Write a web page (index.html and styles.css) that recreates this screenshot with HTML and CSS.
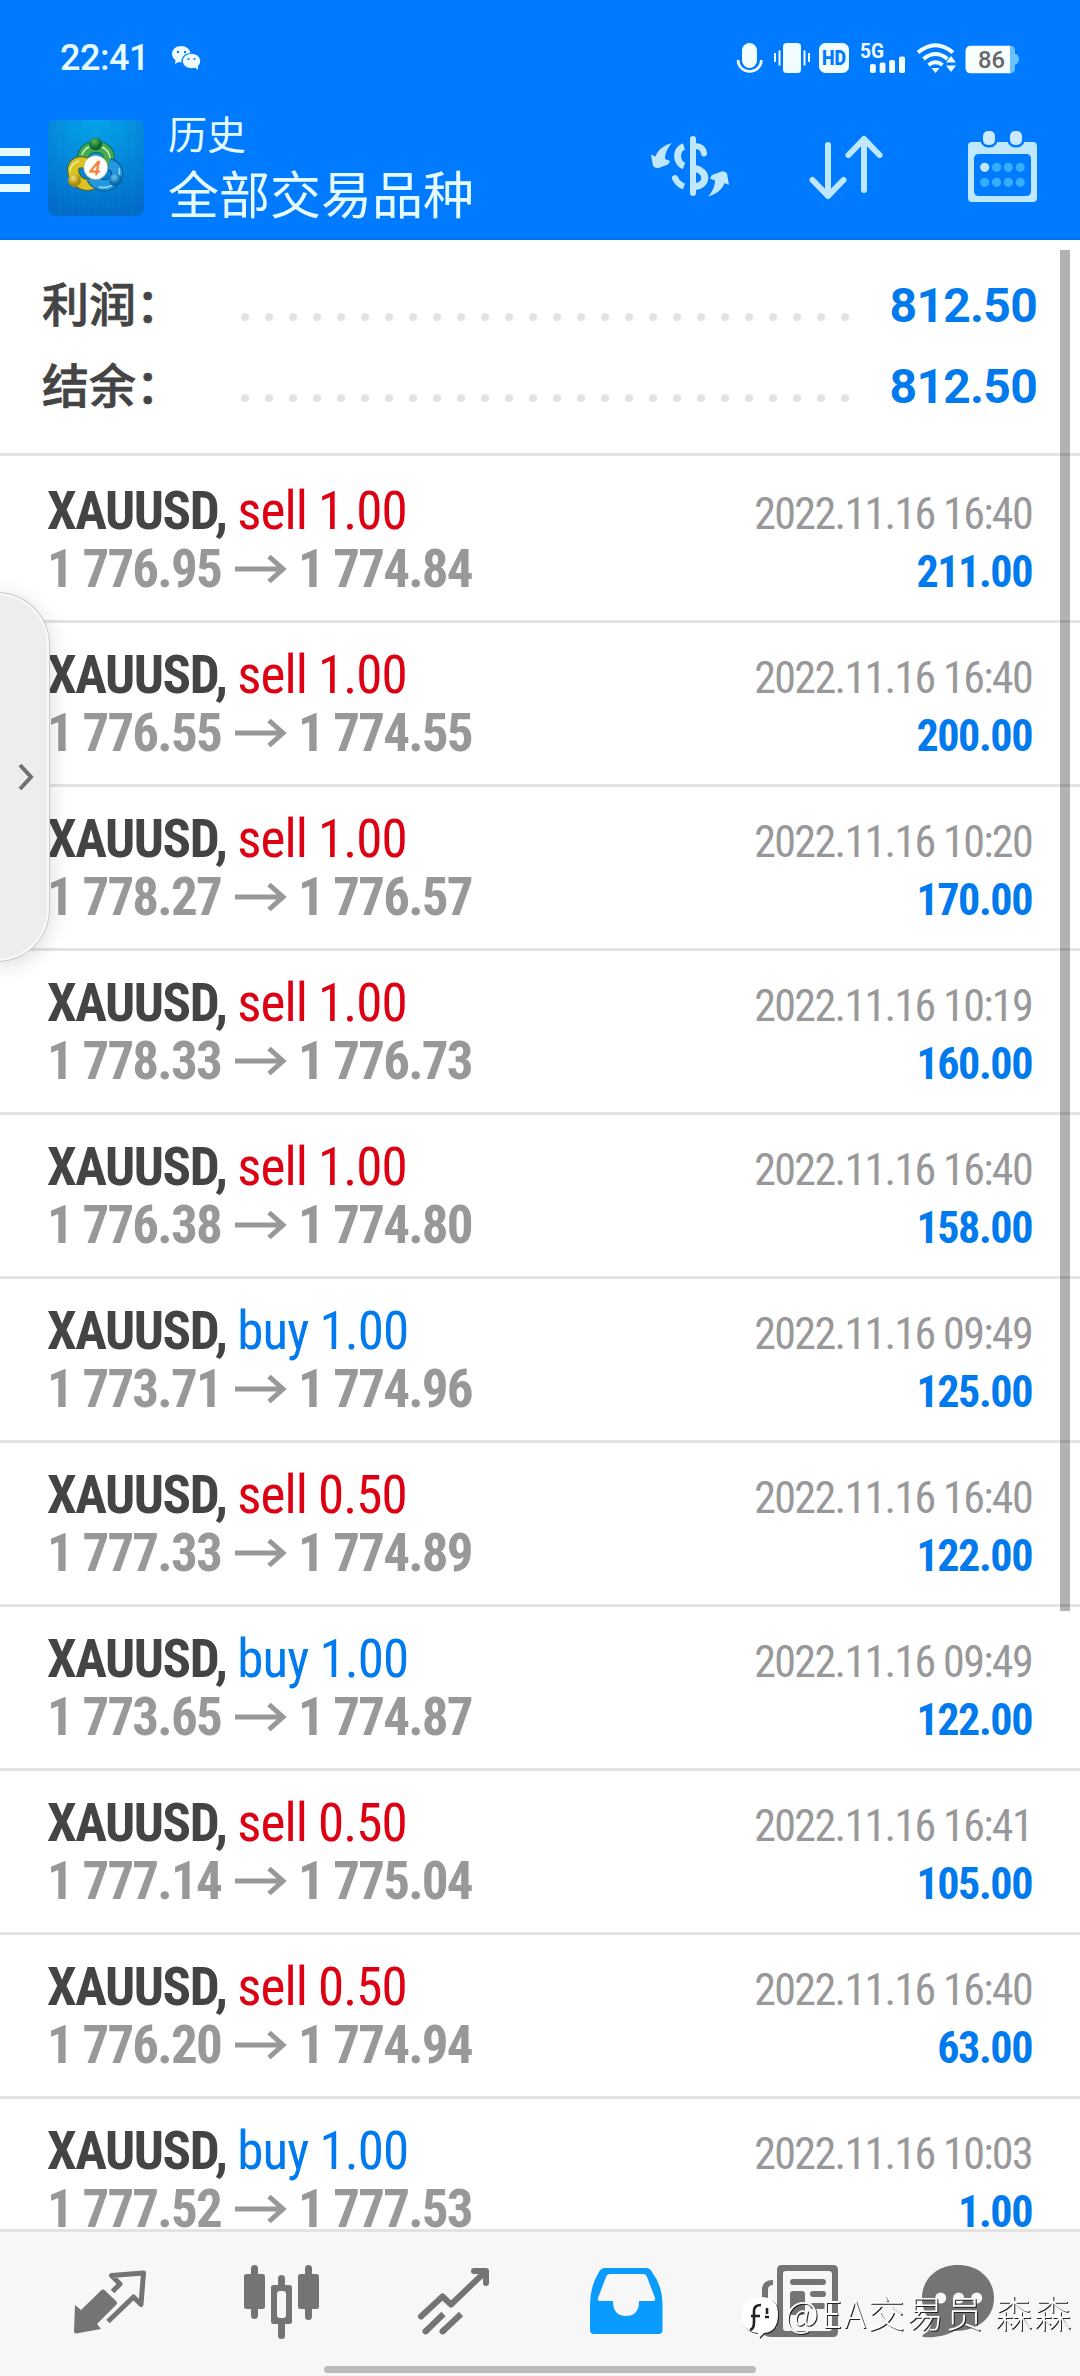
FILE: index.html
```html
<!DOCTYPE html>
<html lang="zh-CN">
<head>
<meta charset="utf-8">
<title>历史</title>
<link rel="stylesheet" href="styles.css">
</head>
<body>
<svg class="defs" width="0" height="0">
  <symbol id="arrow" viewBox="0 0 52 30"><path d="M0 15H48M34 2.500L48 15L34 27.500" fill="none" stroke="currentColor" stroke-width="5"/></symbol>
</svg>
<header class="header">
  <div class="status">
    <span class="clock">22:41</span>
    <svg class="wechat" viewBox="0 0 30 26" width="30" height="26">
      <path fill="#effcff" d="M10.500 1C5 1 1 4.500 1 9c0 2.600 1.400 4.700 3.500 6.200L4 19l3.500-2c1 .3 2 .4 3 .4C10 12 14 8 19.500 8C18.500 4 15 1 10.500 1z"/>
      <ellipse cx="20.500" cy="16" rx="8.700" ry="7.300" fill="#effcff"/><path d="M23 22l4 2.800v-5z" fill="#effcff"/>
      <g fill="#007bff"><circle cx="7" cy="7" r="1.200"/><circle cx="14" cy="7" r="1.200"/><circle cx="17.500" cy="14" r="1.100"/><circle cx="23.500" cy="14" r="1.100"/></g>
    </svg>
    <svg class="indicators" viewBox="735 40 290 36" width="290" height="36">
      <g fill="#f2fdff">
        <rect x="742" y="43" width="15" height="25" rx="7.500"/>
        <path d="M738 60a11.700 11.500 0 0 0 23.400 0" fill="none" stroke="#f2fdff" stroke-width="2.600"/>
        <rect x="783" y="43" width="18" height="30" rx="3.500"/>
        <rect x="778.500" y="50.500" width="2" height="15"/><rect x="774" y="53" width="2" height="9"/>
        <rect x="803.500" y="50.500" width="2" height="15"/><rect x="808" y="53" width="2" height="9"/>
        <rect x="819" y="43" width="30" height="30" rx="6.500"/>
        <rect x="870" y="64" width="5.800" height="9" rx="1.800"/><rect x="879.700" y="62.500" width="5.800" height="10.500" rx="1.800"/>
        <rect x="889.200" y="60" width="5.800" height="13" rx="1.800"/><rect x="899" y="56.500" width="6" height="16.500" rx="1.800"/>
        <path d="M931.500 68h8l-4 5zM946 65.500h10l-5 6.500zM946 62.500h10l-5-6.500z"/>
      </g>
      <g fill="none" stroke="#f2fdff" stroke-width="4"><path d="M918 52.500Q935.500 38 953 52.500"/><path d="M923.500 59Q935.500 49 947.500 59"/><path d="M928.500 65Q935.500 59.500 942.500 65"/></g>
      <text class="hd" x="822" y="65.200" textLength="24" lengthAdjust="spacingAndGlyphs">HD</text>
      <text class="net" x="860" y="58" textLength="24" lengthAdjust="spacingAndGlyphs">5G</text>
      <path d="M1008 45.700h2q5 0 5 5v3q4 1 4 5.500t-4 5.500v3.500q0 5-5 5h-2z" fill="#6cc0ff"/>
      <path d="M1010 45.700H971q-5.500 0-5.500 5.500v16.500q0 5.500 5.500 5.500h39z" fill="#f6feff"/>
      <text class="batt" x="978" y="68" textLength="27" lengthAdjust="spacingAndGlyphs">86</text>
    </svg>
  </div>
  <div class="appbar">
    <div class="burger"><i></i><i></i><i></i></div>
    <svg class="logo" viewBox="48 120 96 96" width="96" height="96">
      <defs>
        <radialGradient id="bg" cx=".5" cy="0" r="1"><stop offset="0" stop-color="#05a5ea"/><stop offset="1" stop-color="#026cc8"/></radialGradient>
        <radialGradient id="gg" cx=".4" cy=".3"><stop offset="0" stop-color="#5fb868"/><stop offset="1" stop-color="#0b6a2b"/></radialGradient>
        <radialGradient id="gy" cx=".4" cy=".3"><stop offset="0" stop-color="#f5e47c"/><stop offset="1" stop-color="#a88c08"/></radialGradient>
        <radialGradient id="gb" cx=".4" cy=".3"><stop offset="0" stop-color="#6ccaf4"/><stop offset="1" stop-color="#0667ab"/></radialGradient>
      </defs>
      <rect x="48" y="120" width="96" height="96" rx="8" fill="url(#bg)"/>
      <path d="M60 120v96M72 120v96M84 120v96M96 120v96M108 120v96M120 120v96M132 120v96M48 132h96M48 144h96M48 156h96M48 168h96M48 180h96M48 192h96M48 204h96" stroke="#40b8ff" stroke-opacity=".1" fill="none"/>
      <g fill="none">
        <path d="M85 164C80 153 87 147 96 147C105 147 112 153 107 164" stroke="#0c6c48" stroke-width="12"/><path d="M85 164C80 153 87 147 96 147C105 147 112 153 107 164" stroke="#45aa52" stroke-width="10"/>
        <path d="M86 163C76 160 71 166 74 175C78 185 88 187 95 183" stroke="#54661a" stroke-width="12"/><path d="M86 163C76 160 71 166 74 175C78 185 88 187 95 183" stroke="#dcc222" stroke-width="10"/>
        <path d="M109 164C118 167 120 175 113 182C106 188 96 185 92 178" stroke="#06538c" stroke-width="12"/><path d="M109 164C118 167 120 175 113 182C106 188 96 185 92 178" stroke="#2498dd" stroke-width="10"/>
      </g>
      <g fill="none" stroke-width="1.400" stroke="#d6f4b0"><path d="M82 155Q84 149 89 147M102 147Q109 150 110 158"/><path d="M70 171Q71 163 79 161"/><path stroke="#8bdcff" d="M119 168Q121 176 115 183Q108 189 99 187"/></g>
      <circle cx="95.700" cy="144" r="6.500" fill="url(#gg)"/><circle cx="74.500" cy="180.500" r="6.500" fill="url(#gy)"/><circle cx="115.500" cy="180" r="6.500" fill="url(#gb)"/>
      <circle cx="95.700" cy="167.500" r="12" fill="#fff" stroke="#a9a78a" stroke-width=".6"/>
      <text x="95" y="174.500" class="four">4</text>
    </svg>
    <div class="titles"><div class="sub">历史</div><div class="title">全部交易品种</div></div>
    <svg class="actions" viewBox="640 120 410 96" width="410" height="96">
      <g fill="none" stroke="#bfe8ff" stroke-width="6" stroke-linecap="round" stroke-linejoin="round">
        <path d="M693 139V193"/>
        <path stroke-linecap="butt" stroke-width="7" d="M684 146.500C675.500 149 675.500 163 684 166"/>
        <path d="M695 146Q703 146 704 153.500"/>
        <path stroke-width="7" d="M695 168.500C708 171 708 185 695 186.500"/>
        <path stroke-linecap="butt" d="M675 177.500Q677 184 684 186.500"/><path d="M675 178l.3 .8"/>
        <path d="M828 145V195M812.500 180L828 196L843.500 180"/>
        <path d="M864 190V140M848.500 155L864 139L879.500 155"/>
      </g>
      <g fill="#bfe8ff">
        <path id="swing" d="M672 143C664 145 657.500 150 655.500 156.500L651 154.500L653 166Q655 168.500 658.500 168L668 164.500L670 161L665 159C665 153 668 147 672 143z"/>
        <use href="#swing" transform="rotate(180 690 169.700)"/>
      </g>
      <path fill="#bfe8ff" fill-rule="evenodd" d="M972 142h61q4 0 4 4v52q0 4-4 4h-61q-4 0-4-4v-52q0-4 4-4zM979 154q-5 0-5 5v32q0 5 5 5h47q5 0 5-5v-32q0-5-5-5z"/>
      <g fill="#cbe9ff" stroke="#007bff" stroke-width="5" paint-order="stroke"><rect x="983" y="131" width="12" height="14" rx="5"/><rect x="1010" y="131" width="12" height="14" rx="5"/></g>
      <circle cx="984.700" cy="167.300" r="4.600" fill="#bfe8ff"/>
      <g fill="#35aeff"><circle cx="996.600" cy="167.300" r="4.600"/><circle cx="1008.400" cy="167.300" r="4.600"/><circle cx="1020.300" cy="167.300" r="4.600"/><circle cx="984.700" cy="182.300" r="4.600"/><circle cx="996.600" cy="182.300" r="4.600"/><circle cx="1008.400" cy="182.300" r="4.600"/><circle cx="1020.300" cy="182.300" r="4.600"/></g>
    </svg>
  </div>
</header>
<main class="content">
  <section class="summary">
    <div class="sum"><span class="label">利润：</span><span class="dots"></span><b class="total">812.50</b></div>
    <div class="sum"><span class="label">结余：</span><span class="dots"></span><b class="total">812.50</b></div>
  </section>
  <section class="deals" id="deals"></section>
</main>
<nav class="tabs">
  <svg viewBox="0 2229 1080 130" width="1080" height="130">
    <g fill="#747474">
      <path d="M75 2305L81 2310L101 2290.500Q103 2288.500 105 2290.500L116 2301Q118 2303 116 2305L97 2324L101 2329L76 2333.500Q74 2333.500 74 2331.500z"/>
      <rect x="244" y="2274" width="21" height="35" rx="2.500"/><rect x="251" y="2265" width="7" height="54" rx="3.500"/>
      <path fill-rule="evenodd" d="M273.500 2285h16q2.500 0 2.500 2.500v34q0 2.500-2.500 2.500h-16q-2.500 0-2.500-2.500v-34q0-2.500 2.500-2.500zM280 2291q-3 0-3 3v21q0 3 3 3h3q3 0 3-3v-21q0-3-3-3z"/>
      <rect x="278" y="2275" width="7" height="14" rx="3.500"/><rect x="278" y="2320" width="7" height="19" rx="3.500"/>
      <rect x="298" y="2274" width="21" height="35" rx="2.500"/><rect x="305" y="2265" width="7" height="55" rx="3.500"/>
      <path fill-rule="evenodd" d="M782 2265h51q5 0 5 5v62q0 5-5 5h-62q-9 0-9-9v-38q0-10 11-10v5q-5 0-5 5v38q0 3 5 3l4-4v-57q0-5 5-5zM786 2271q-3 0-3 3v54q0 3 3 3h43q3 0 3-3v-54q0-3-3-3z"/>
      <rect x="790" y="2279" width="36" height="6" rx="3"/><rect x="790" y="2291" width="15" height="24" rx="3"/><rect x="810" y="2291" width="16" height="6" rx="3"/><rect x="810" y="2303" width="16" height="6" rx="3"/>
      <path d="M958 2265C980 2265 994 2280 994 2298C994 2318 978 2331 954 2331C946 2336 934 2338 924 2337C922 2337 922 2335 924 2334C930 2331 931 2326 931 2321C925 2315 922 2307 922 2298C922 2280 936 2265 958 2265z"/>
    </g>
    <g fill="#f7f7f7"><circle cx="940.700" cy="2298" r="5.500"/><circle cx="958.700" cy="2298" r="5.500"/><circle cx="976.700" cy="2298" r="5.500"/></g>
    <g fill="none" stroke="#747474" stroke-width="5">
      <path d="M112.500 2291.500L120 2284L111.500 2275.500L143.500 2273L141 2304.500L133.500 2297L108 2321.500" stroke-linejoin="round"/>
      <g stroke-width="6" stroke-linecap="round" stroke-linejoin="round"><path d="M421 2316.500L442.500 2296.500L451 2304.500L485.500 2271.500M474 2271H486V2283"/><path stroke-linecap="butt" d="M425 2332L443.500 2314M442 2332L461 2314"/><path d="M425.500 2331.500l1-1M442.500 2331.500l1-1"/></g>
    </g>
    <path fill="#0a9bff" fill-rule="evenodd" d="M605 2268h41q4 0 6 4q10.500 14 10.500 33v25q0 4-4 4h-64.500q-4 0-4-4v-25q0-19 9-33q2-4 6-4zM610 2274q-3 0-4 3l-8 21q-1 3 2 3h13q0 15 13 15t13-15h14q3 0 2-3l-8-21q-1-3-4-3z"/>
    <g class="mark">
      <path fill="#fff" d="M760 2297q18 0 18 17q0 18-14 19l-5 5l-1-5q-16-1-16-18t18-18z"/>
      <path d="M750 2330q4-1 4-8v-11q0-6 7-6M751 2316h9M767 2308v6M765 2317h4" fill="none" stroke="#222" stroke-width="2.600"/>
      <text x="785" y="2328" class="marktext" textLength="286">@EA交易员 森森</text>
    </g>
  </svg>
  <div class="home"></div>
</nav>
<div class="scrollbar"></div>
<div class="handle"><svg viewBox="0 0 16 28" width="16" height="28"><path d="M2 2L13 14L2 26" fill="none" stroke="#707070" stroke-width="4"/></svg></div>
<script src="deals.js"></script>
</body>
</html>
```
FILE: styles.css
```css
* { box-sizing: border-box; }
body { margin: 0; width: 1080px; height: 2376px; overflow: hidden; position: relative; display: flex; flex-direction: column; background: #fff; font-family: Roboto, "Noto Sans CJK SC", sans-serif; }
.defs { position: absolute; }
.header { flex: none; height: 240px; background: #007bff; border-bottom: 2px solid #0070e6; color: #e6fbff; }
.status { height: 120px; padding: 37px 55px 0 60px; display: flex; align-items: flex-start; }
.clock { font-size: 36px; line-height: 42px; font-weight: 500; letter-spacing: -0.5px; width: 88px; }
.wechat { margin: 8px 0 0 23px; }
.indicators { margin: 3px 0 0 auto; }
.hd { font: 900 20.5px Roboto, sans-serif; fill: #007bff; }
.net { font: 700 20px Roboto, sans-serif; fill: #f2fdff; }
.batt { font: 500 24.5px Roboto, sans-serif; fill: #686868; }
.four { font: italic 400 20px "Liberation Sans", sans-serif; fill: #f5803a; text-anchor: middle; stroke: #f5803a; stroke-width: .6; }
.appbar { height: 96px; display: flex; }
.burger { width: 30px; margin-right: 18px; display: flex; flex-direction: column; gap: 10px; padding-top: 28px; }
.burger i { height: 8px; background: #e6fbff; }
.titles { margin-left: 24px; flex: 1; font-family: "Noto Sans CJK SC", sans-serif; font-weight: 400; white-space: nowrap; }
.sub { font-size: 39px; line-height: 40px; margin-top: -8px; }
.title { font-size: 51px; line-height: 60px; margin-top: 10px; }
.actions { margin-right: 30px; }
.content { flex: none; height: 1989px; overflow: hidden; }
.summary { height: 216px; border-bottom: 3px solid #e3e3e3; padding: 25px 43px 0 42px; }
.sum { height: 81px; display: flex; align-items: center; }
.label { width: 193px; margin-top: -8px; font: 500 47px/81px "Noto Sans CJK SC", sans-serif; color: #444; -webkit-text-stroke: .7px #444; }
.dots { width: 624px; height: 8px; margin-top: 22px; margin-left: -2px; background: radial-gradient(circle at 12px 4px, #e2e2e2 3.6px, transparent 4.4px) 0 0 / 24px 8px repeat-x; }
.total { margin-left: auto; font-size: 48px; font-weight: 700; letter-spacing: -.7px; color: #007aed; }
.deals { padding-top: 3px; font-family: "Roboto Condensed", sans-serif; }
.deal { height: 164px; padding: 23px 48px 0 47px; border-bottom: 3px solid #e3e3e3; }
.line { height: 58px; line-height: 58px; display: flex; align-items: baseline; justify-content: space-between; white-space: pre; }
.name { font-size: 53px; letter-spacing: -1.45px; color: #444; }
.sell, .buy { letter-spacing: -.95px; }
.sell { color: #dc0012; }
.buy { color: #007aed; }
.time { font-size: 44px; letter-spacing: -1.65px; color: #98989a; }
.price { font-size: 53px; letter-spacing: -1.8px; font-weight: 700; color: #98989b; }
.price svg { width: 52px; height: 30px; margin: 0 11px 0 14px; position: relative; top: -3px; }
.profit { font-size: 44px; letter-spacing: -1.4px; font-weight: 700; color: #007aed; }
.tabs { flex: none; height: 147px; background: #f7f7f7; border-top: 3px solid #e3e3e3; }
.tabs svg { display: block; margin-top: -3px; }
.mark { filter: drop-shadow(1.5px 1.5px 0 #222); }
.marktext { font: 300 37px "Noto Sans CJK SC", sans-serif; fill: #fff; }
.home { width: 432px; height: 7px; border-radius: 4px; background: #bbb; margin: 7px 0 0 324px; }
.scrollbar { position: absolute; left: 1060px; top: 250px; width: 10px; height: 1361px; background: rgba(0,0,0,.3); }
.handle { position: absolute; left: -4px; top: 593px; width: 53px; height: 368px; border: 2px solid #fafafa; border-radius: 0 52px 52px 0; background: #ededed; box-shadow: 0 0 0 1px #c8c8c8, 0 4px 22px rgba(0,0,0,.16); display: flex; align-items: center; justify-content: flex-end; padding-right: 13px; }
```
FILE: deals.js
```javascript
const deals = [
  ["sell", "1.00", "1 776.95", "1 774.84", "16:40", "211.00"],
  ["sell", "1.00", "1 776.55", "1 774.55", "16:40", "200.00"],
  ["sell", "1.00", "1 778.27", "1 776.57", "10:20", "170.00"],
  ["sell", "1.00", "1 778.33", "1 776.73", "10:19", "160.00"],
  ["sell", "1.00", "1 776.38", "1 774.80", "16:40", "158.00"],
  ["buy", "1.00", "1 773.71", "1 774.96", "09:49", "125.00"],
  ["sell", "0.50", "1 777.33", "1 774.89", "16:40", "122.00"],
  ["buy", "1.00", "1 773.65", "1 774.87", "09:49", "122.00"],
  ["sell", "0.50", "1 777.14", "1 775.04", "16:41", "105.00"],
  ["sell", "0.50", "1 776.20", "1 774.94", "16:40", "63.00"],
  ["buy", "1.00", "1 777.52", "1 777.53", "10:03", "1.00"]
];
document.getElementById("deals").innerHTML = deals.map(([side, lots, open, close, time, profit]) => `<article class="deal"><div class="line"><span class="name"><b>XAUUSD,</b> <span class="${side}">${side} ${lots}</span></span><span class="time">2022.11.16 ${time}</span></div><div class="line"><span class="price">${open}<svg><use href="#arrow"/></svg>${close}</span><span class="profit">${profit}</span></div></article>`).join("");
```
